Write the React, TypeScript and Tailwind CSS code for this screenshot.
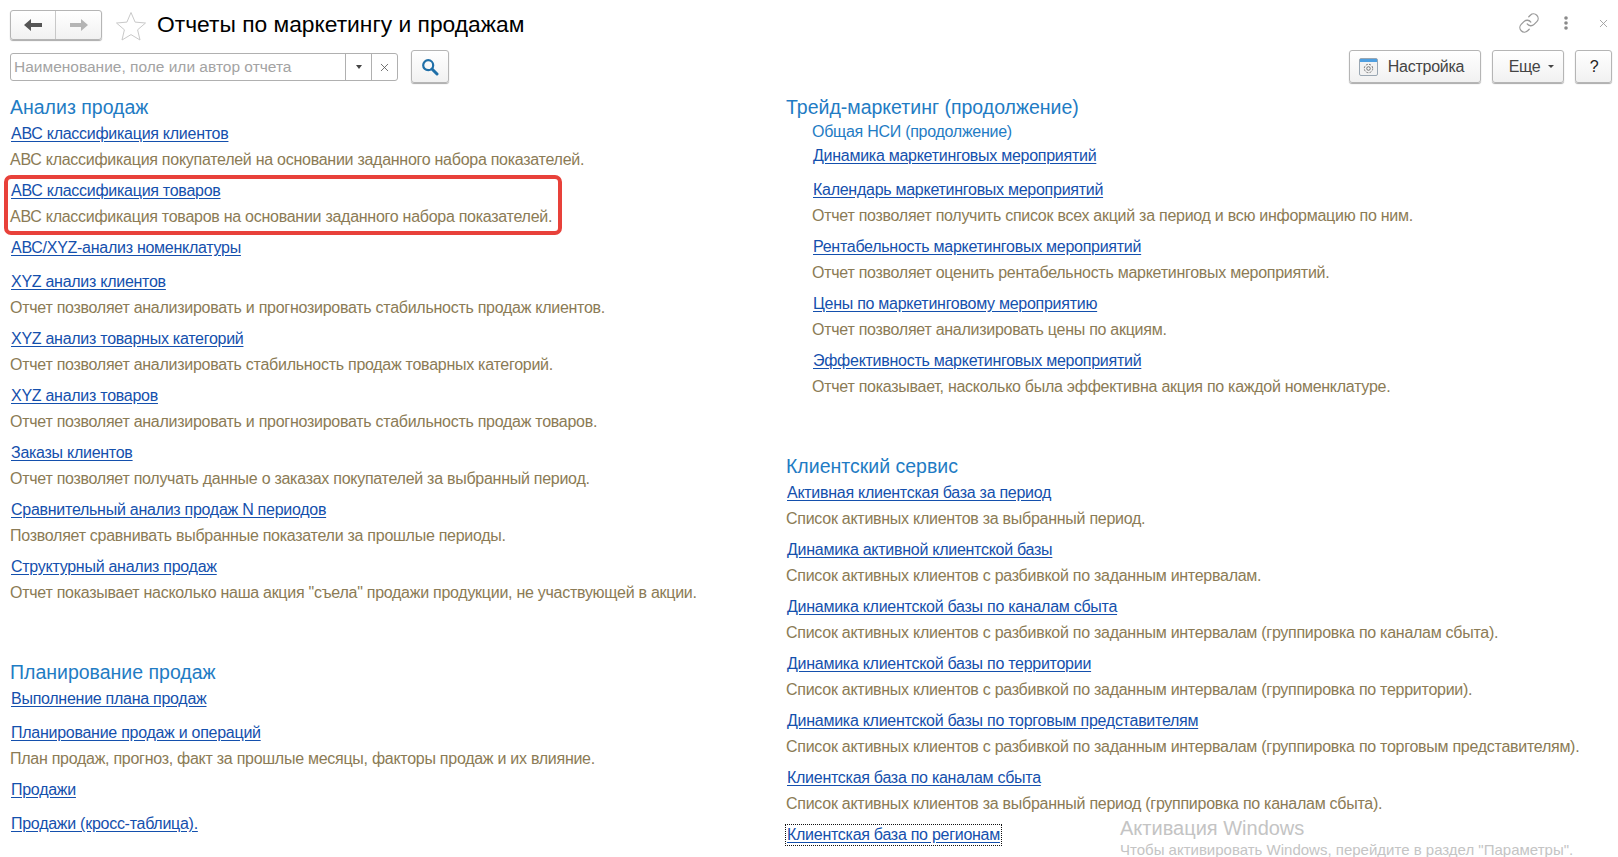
import { Link as LinkIcon, X } from "lucide-react";

type Report = { title: string; desc?: string; focused?: boolean };

const salesAnalysis: Report[] = [
  { title: "АВС классификация клиентов", desc: "АВС классификация покупателей на основании заданного набора показателей." },
  { title: "АВС классификация товаров", desc: "АВС классификация товаров на основании заданного набора показателей." },
  { title: "АВС/XYZ-анализ номенклатуры" },
  { title: "XYZ анализ клиентов", desc: "Отчет позволяет анализировать и прогнозировать стабильность продаж клиентов." },
  { title: "XYZ анализ товарных категорий", desc: "Отчет позволяет анализировать стабильность продаж товарных категорий." },
  { title: "XYZ анализ товаров", desc: "Отчет позволяет анализировать и прогнозировать стабильность продаж товаров." },
  { title: "Заказы клиентов", desc: "Отчет позволяет получать данные о заказах покупателей за выбранный период." },
  { title: "Сравнительный анализ продаж N периодов", desc: "Позволяет сравнивать выбранные показатели за прошлые периоды." },
  { title: "Структурный анализ продаж", desc: "Отчет показывает насколько наша акция \"съела\" продажи продукции, не участвующей в акции." },
];

const salesPlanning: Report[] = [
  { title: "Выполнение плана продаж" },
  { title: "Планирование продаж и операций", desc: "План продаж, прогноз, факт за прошлые месяцы, факторы продаж и их влияние." },
  { title: "Продажи" },
  { title: "Продажи (кросс-таблица)." },
];

const tradeMarketing: Report[] = [
  { title: "Динамика маркетинговых мероприятий" },
  { title: "Календарь маркетинговых мероприятий", desc: "Отчет позволяет получить список всех акций за период и всю информацию по ним." },
  { title: "Рентабельность маркетинговых мероприятий", desc: "Отчет позволяет оценить рентабельность маркетинговых мероприятий." },
  { title: "Цены по маркетинговому мероприятию", desc: "Отчет позволяет анализировать цены по акциям." },
  { title: "Эффективность маркетинговых мероприятий", desc: "Отчет показывает, насколько была эффективна акция по каждой номенклатуре." },
];

const clientService: Report[] = [
  { title: "Активная клиентская база за период", desc: "Список активных клиентов за выбранный период." },
  { title: "Динамика активной клиентской базы", desc: "Список активных клиентов с разбивкой по заданным интервалам." },
  { title: "Динамика клиентской базы по каналам сбыта", desc: "Список активных клиентов с разбивкой по заданным интервалам (группировка по каналам сбыта)." },
  { title: "Динамика клиентской базы по территории", desc: "Список активных клиентов с разбивкой по заданным интервалам (группировка по территории)." },
  { title: "Динамика клиентской базы по торговым представителям", desc: "Список активных клиентов с разбивкой по заданным интервалам (группировка по торговым представителям)." },
  { title: "Клиентская база по каналам сбыта", desc: "Список активных клиентов за выбранный период (группировка по каналам сбыта)." },
  { title: "Клиентская база по регионам", focused: true },
];

function ReportRow({ report }: { report: Report }) {
  return (
    <div className={report.desc ? "mb-[5px]" : "mb-[8px]"}>
      <div className="h-[26px] flex items-center">
        <a
          href="#"
          className={
            "text-[#1450ad] underline underline-offset-2 leading-[20px] px-px " +
            (report.focused ? "outline-1 outline-dotted outline-[#111]" : "")
          }
        >
          {report.title}
        </a>
      </div>
      {report.desc && (
        <div className="h-[26px] leading-[26px] text-[#8b7b55] whitespace-nowrap">{report.desc}</div>
      )}
    </div>
  );
}

function Section({ title, sub, items, indent }: { title: string; sub?: string; items: Report[]; indent?: boolean }) {
  return (
    <section className="mb-[53px]">
      <h2 className="h-[27px] leading-[26px] text-[19.5px] tracking-normal text-[#1f7cc4]">{title}</h2>
      <div className={indent ? "pl-[26px]" : ""}>
        {sub && <div className="h-[22px] leading-[22px] text-[#1f7cc4]">{sub}</div>}
        {items.map((r) => (
          <ReportRow key={r.title} report={r} />
        ))}
      </div>
    </section>
  );
}

const btn =
  "border border-[#b5b5b5] rounded-[3px] bg-linear-to-b from-white to-[#f1f1f1] shadow-[0_1px_1px_#aaa] flex items-center justify-center";

export default function App() {
  return (
    <div className="relative w-[1618px] h-[857px] overflow-hidden bg-white font-['Liberation_Sans',Arial,sans-serif] text-[16px] tracking-[-0.27px]">
      <header className="h-[50px] pt-[10px] pl-[10px] pr-[8px] flex items-start">
        <div className={btn + " w-[92px] h-[30px]"}>
          <div className="w-[46px] h-full flex items-center justify-center border-r border-[#c8c8c8]">
            <svg width="20" height="14" viewBox="0 0 20 14">
              <path d="M1 7l7-6v4h11v4H8v4z" fill="#555" />
            </svg>
          </div>
          <div className="w-[46px] h-full flex items-center justify-center">
            <svg width="20" height="14" viewBox="0 0 20 14">
              <path d="M19 7l-7-6v4H1v4h11v4z" fill="#b4b4b4" />
            </svg>
          </div>
        </div>
        <svg className="ml-[13px] mt-px" width="32" height="30" viewBox="0 0 32 30" fill="none">
          <path
            d="M16 1.5l4.1 9.6 10.4.9-7.9 6.8 2.4 10.2-9-5.4-9 5.4 2.4-10.2L1.5 12l10.4-.9z"
            stroke="#c9c9c9"
            fill="#fff"
          />
        </svg>
        <h1 className="ml-[10px] -mt-px text-[22.8px] tracking-normal leading-[30px] text-black">Отчеты по маркетингу и продажам</h1>
        <div className="ml-auto flex items-center h-[26px] text-[#9a9a9a]">
          <LinkIcon size={22} strokeWidth={1.4} />
          <svg className="ml-[24px]" width="4" height="14" viewBox="0 0 4 14">
            <circle cx="2" cy="2" r="1.8" fill="#8a8a8a" />
            <circle cx="2" cy="7" r="1.8" fill="#8a8a8a" />
            <circle cx="2" cy="12" r="1.8" fill="#8a8a8a" />
          </svg>
          <X className="ml-[29px]" size={13} strokeWidth={1.6} />
        </div>
      </header>

      <div className="h-[44px] pl-[10px] pr-[6px] flex items-start">
        <div className="mt-[3px] w-[388px] h-[28px] border border-[#b0b0b0] rounded-[3px] flex items-center text-[15.5px] tracking-normal">
          <div className="flex-1 pl-[3px] text-[#a3a3a3] whitespace-nowrap">Наименование, поле или автор отчета</div>
          <div className="w-[26px] h-full border-l border-[#b0b0b0] flex items-center justify-center">
            <span className="w-0 h-0 border-x-[3px] border-x-transparent border-t-[4px] border-t-[#444]" />
          </div>
          <div className="w-[26px] h-full border-l border-[#b0b0b0] flex items-center justify-center text-[#555]">
            <X size={13} strokeWidth={1.5} />
          </div>
        </div>
        <button className={btn + " ml-[13px] w-[38px] h-[33px]"}>
          <svg width="18" height="18" viewBox="0 0 18 18" fill="none">
            <circle cx="7.2" cy="7.2" r="5" stroke="#1f6fa8" strokeWidth="2.2" />
            <path d="M11 11l5 5" stroke="#1f6fa8" strokeWidth="3" strokeLinecap="round" />
          </svg>
        </button>
        <button className={btn + " ml-auto w-[132px] h-[33px] pr-[7px] text-[#444]"}>
          <svg width="19" height="18" viewBox="0 0 19 18" className="mr-[10px]">
            <rect x="0.5" y="0.5" width="18" height="17" rx="1.5" fill="#f2f2f2" stroke="#9aa7b3" />
            <rect x="1" y="1" width="17" height="3" fill="#4f9fe0" />
            <circle cx="9.5" cy="10.5" r="1.8" fill="none" stroke="#777" />
            <circle cx="9.5" cy="10.5" r="4.2" fill="none" stroke="#777" strokeDasharray="2 1.3" />
          </svg>
          Настройка
        </button>
        <button className={btn + " ml-[11px] w-[72px] h-[33px] pl-[7px] text-[#444]"}>
          Еще
          <span className="ml-[8px] w-0 h-0 border-x-[3px] border-x-transparent border-t-[3px] border-t-[#444]" />
        </button>
        <button className={btn + " ml-[11px] w-[37px] h-[33px] pl-px text-[#222]"}>?</button>
      </div>

      <main className="grid grid-cols-[776px_1fr] pl-[10px]">
        <div>
          <Section title="Анализ продаж" items={salesAnalysis} />
          <Section title="Планирование продаж" items={salesPlanning} />
        </div>
        <div>
          <Section title="Трейд-маркетинг (продолжение)" sub="Общая НСИ (продолжение)" items={tradeMarketing} indent />
          <Section title="Клиентский сервис" items={clientService} />
        </div>
      </main>

      {/* красная рамка поверх скриншота */}
      <div className="absolute left-[4px] top-[175px] w-[558px] h-[60px] border-[4px] border-[#e8413a] rounded-[7px]" />

      <div className="absolute left-[1120px] top-[816px] text-[20px] tracking-normal leading-[24px] text-[#c4c4c4]">Активация Windows</div>
      <div className="absolute left-[1120px] top-[841px] text-[15px] tracking-normal leading-[18px] text-[#c4c4c4] whitespace-nowrap">
        Чтобы активировать Windows, перейдите в раздел "Параметры".
      </div>
    </div>
  );
}
